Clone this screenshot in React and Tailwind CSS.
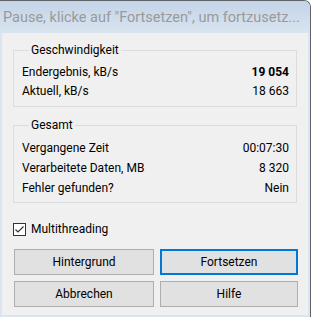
import React from 'react';

const font = { fontFamily: 'Roboto, "Noto Sans", sans-serif' };

function Row({ label, value, bold, tall }) {
    return (
        <div className={`flex justify-between items-center ${tall ? 'h-[20px]' : 'h-[19px]'}`}>
            <span>{label}</span>
            <span className={bold ? 'font-bold' : ''}>{value}</span>
        </div>
    );
}

function Group({ title, children, className }) {
    return (
        <fieldset className={`border border-[#dcdcdc] ml-[11px] w-[284px] pl-[8px] pr-[7px] ${className}`}>
            <legend className="ml-[7px] px-[2px] leading-[16px]">{title}</legend>
            {children}
        </fieldset>
    );
}

function WinButton({ children, focused }) {
    return (
        <button
            className={`h-[26px] bg-[#e1e1e1] text-[12px] text-black ${focused ? 'border-2 border-[#0078d7]' : 'border border-[#adadad]'}`}
        >
            {children}
        </button>
    );
}

export default function App() {
    return (
        <div className="w-[313px] h-[317px] bg-white" style={font}>
            <div className="w-[311px] h-[317px] flex flex-col border-r border-t border-[#5f6368] rounded-tr-[7px] overflow-hidden bg-[#dae5f1]">
                <div className="h-[32px] shrink-0 bg-gradient-to-b from-[#c3d4e7] to-[#d9e4f0] pl-[3px] pr-[4px] pt-[2px] flex items-center">
                    <span className="text-[14.5px] text-[#9a9a9a] whitespace-nowrap">
                        Pause, klicke auf "Fortsetzen", um fortzusetz...
                    </span>
                </div>
                <div className="flex-1 mx-[2px] mb-[2px] bg-[#f0f0f0] text-[12px] text-black pt-[9px]">
                    <Group title="Geschwindigkeit" className="pt-[4px] pb-[6px]">
                        <Row label="Endergebnis, kB/s" value="19 054" bold />
                        <Row label="Aktuell, kB/s" value="18 663" />
                    </Group>
                    <Group title="Gesamt" className="mt-[10px] pt-[5px] pb-[4px]">
                        <Row label="Vergangene Zeit" value="00:07:30" tall />
                        <Row label="Verarbeitete Daten, MB" value="8 320" tall />
                        <Row label="Fehler gefunden?" value="Nein" tall />
                    </Group>
                    <label className="flex items-center ml-[11px] mt-[18px] h-[16px]">
                        <span className="w-[13px] h-[13px] border border-[#333333] bg-white flex items-center justify-center">
                            <svg width="11" height="11" viewBox="0 0 11 11">
                                <path d="M1.5 5.5 L4 8 L9.5 2.5" fill="none" stroke="#333333" strokeWidth="1.2" />
                            </svg>
                        </span>
                        <span className="ml-[5px]">Multithreading</span>
                    </label>
                    <div className="grid grid-cols-[140px_138px] gap-x-[6px] gap-y-[6px] ml-[12px] mt-[12px]">
                        <WinButton>Hintergrund</WinButton>
                        <WinButton focused>Fortsetzen</WinButton>
                        <WinButton>Abbrechen</WinButton>
                        <WinButton>Hilfe</WinButton>
                    </div>
                </div>
            </div>
        </div>
    );
}
